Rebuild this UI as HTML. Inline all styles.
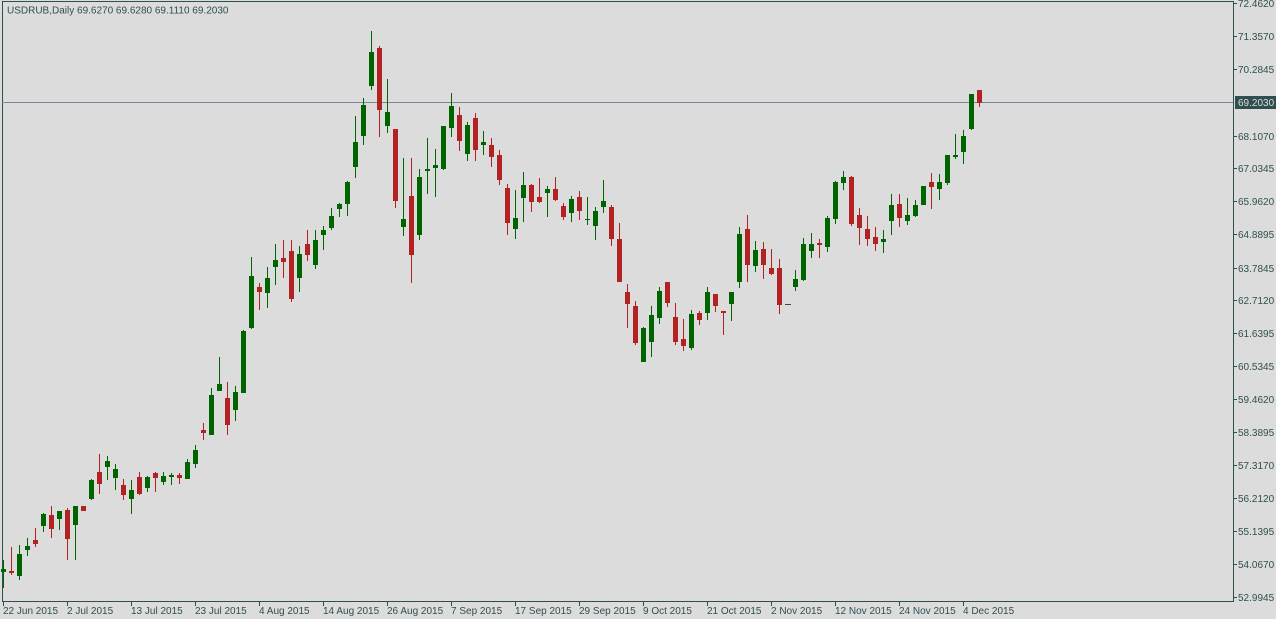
<!DOCTYPE html>
<html><head><meta charset="utf-8"><style>
html,body{margin:0;padding:0;background:#dcdcdc;}
svg{display:block;}
text{font-family:"Liberation Sans",sans-serif;font-size:10px;fill:#2f4f4f;}
</style></head><body>
<svg width="1276" height="619" viewBox="0 0 1276 619" xmlns="http://www.w3.org/2000/svg">
<rect width="1276" height="619" fill="#dcdcdc"/>
<rect x="2.5" y="1.5" width="1231" height="600" fill="none" stroke="#2f4f4f" stroke-width="1"/>
<line x1="2" y1="102.5" x2="1233" y2="102.5" stroke="#778899" stroke-width="1"/>
<text x="7" y="13.5">USDRUB,Daily  69.6270 69.6280 69.1110 69.2030</text>
<g stroke="#2f4f4f" stroke-width="1">
<line x1="1233" y1="3.5" x2="1237" y2="3.5"/><line x1="1233" y1="36.5" x2="1237" y2="36.5"/><line x1="1233" y1="69.5" x2="1237" y2="69.5"/><line x1="1233" y1="136.5" x2="1237" y2="136.5"/><line x1="1233" y1="168.5" x2="1237" y2="168.5"/><line x1="1233" y1="201.5" x2="1237" y2="201.5"/><line x1="1233" y1="234.5" x2="1237" y2="234.5"/><line x1="1233" y1="268.5" x2="1237" y2="268.5"/><line x1="1233" y1="300.5" x2="1237" y2="300.5"/><line x1="1233" y1="333.5" x2="1237" y2="333.5"/><line x1="1233" y1="366.5" x2="1237" y2="366.5"/><line x1="1233" y1="399.5" x2="1237" y2="399.5"/><line x1="1233" y1="432.5" x2="1237" y2="432.5"/><line x1="1233" y1="465.5" x2="1237" y2="465.5"/><line x1="1233" y1="498.5" x2="1237" y2="498.5"/><line x1="1233" y1="531.5" x2="1237" y2="531.5"/><line x1="1233" y1="564.5" x2="1237" y2="564.5"/><line x1="1233" y1="597.5" x2="1237" y2="597.5"/>
<line x1="3.5" y1="601" x2="3.5" y2="606"/><line x1="67.5" y1="601" x2="67.5" y2="606"/><line x1="131.5" y1="601" x2="131.5" y2="606"/><line x1="195.5" y1="601" x2="195.5" y2="606"/><line x1="259.5" y1="601" x2="259.5" y2="606"/><line x1="323.5" y1="601" x2="323.5" y2="606"/><line x1="387.5" y1="601" x2="387.5" y2="606"/><line x1="451.5" y1="601" x2="451.5" y2="606"/><line x1="515.5" y1="601" x2="515.5" y2="606"/><line x1="579.5" y1="601" x2="579.5" y2="606"/><line x1="643.5" y1="601" x2="643.5" y2="606"/><line x1="707.5" y1="601" x2="707.5" y2="606"/><line x1="771.5" y1="601" x2="771.5" y2="606"/><line x1="835.5" y1="601" x2="835.5" y2="606"/><line x1="899.5" y1="601" x2="899.5" y2="606"/><line x1="963.5" y1="601" x2="963.5" y2="606"/>
</g>
<g>
<text x="1238" y="7">72.4620</text><text x="1238" y="40">71.3570</text><text x="1238" y="73">70.2845</text>
<text x="1238" y="140">68.1070</text><text x="1238" y="172">67.0345</text><text x="1238" y="205">65.9620</text><text x="1238" y="238">64.8895</text><text x="1238" y="272">63.7845</text><text x="1238" y="304">62.7120</text><text x="1238" y="337">61.6395</text><text x="1238" y="370">60.5345</text><text x="1238" y="403">59.4620</text><text x="1238" y="436">58.3895</text><text x="1238" y="469">57.3170</text><text x="1238" y="502">56.2120</text><text x="1238" y="535">55.1395</text><text x="1238" y="568">54.0670</text><text x="1238" y="601">52.9945</text>
</g>
<rect x="1235" y="96" width="41" height="13" fill="#2f4f4f"/>
<text x="1238" y="106" style="fill:#dcdcdc">69.2030</text>
<g>
<text x="3" y="614">22 Jun 2015</text><text x="67" y="614">2 Jul 2015</text><text x="131" y="614">13 Jul 2015</text><text x="195" y="614">23 Jul 2015</text><text x="259" y="614">4 Aug 2015</text><text x="323" y="614">14 Aug 2015</text><text x="387" y="614">26 Aug 2015</text><text x="451" y="614">7 Sep 2015</text><text x="515" y="614">17 Sep 2015</text><text x="579" y="614">29 Sep 2015</text><text x="643" y="614">9 Oct 2015</text><text x="707" y="614">21 Oct 2015</text><text x="771" y="614">2 Nov 2015</text><text x="835" y="614">12 Nov 2015</text><text x="899" y="614">24 Nov 2015</text><text x="963" y="614">4 Dec 2015</text>
</g>
<g fill="#006400">
<rect x="3" y="560" width="1" height="28"/><rect x="1" y="569" width="5" height="3"/>
<rect x="19" y="545" width="1" height="35"/><rect x="17" y="554" width="5" height="22"/>
<rect x="27" y="538" width="1" height="18"/><rect x="25" y="546" width="5" height="4"/>
<rect x="43" y="513" width="1" height="19"/><rect x="41" y="514" width="5" height="12"/>
<rect x="59" y="511" width="1" height="19"/><rect x="57" y="511" width="5" height="8"/>
<rect x="75" y="506" width="1" height="54"/><rect x="73" y="506" width="5" height="19"/>
<rect x="91" y="479" width="1" height="21"/><rect x="89" y="480" width="5" height="19"/>
<rect x="107" y="456" width="1" height="24"/><rect x="105" y="461" width="5" height="6"/>
<rect x="115" y="464" width="1" height="26"/><rect x="113" y="469" width="5" height="9"/>
<rect x="131" y="480" width="1" height="34"/><rect x="129" y="490" width="5" height="9"/>
<rect x="147" y="476" width="1" height="16"/><rect x="145" y="477" width="5" height="11"/>
<rect x="163" y="472" width="1" height="13"/><rect x="161" y="476" width="5" height="6"/>
<rect x="171" y="473" width="1" height="12"/><rect x="169" y="475" width="5" height="2"/>
<rect x="187" y="459" width="1" height="20"/><rect x="185" y="462" width="5" height="17"/>
<rect x="195" y="445" width="1" height="23"/><rect x="193" y="450" width="5" height="14"/>
<rect x="211" y="388" width="1" height="47"/><rect x="209" y="395" width="5" height="40"/>
<rect x="219" y="357" width="1" height="34"/><rect x="217" y="384" width="5" height="7"/>
<rect x="235" y="386" width="1" height="35"/><rect x="233" y="392" width="5" height="18"/>
<rect x="243" y="330" width="1" height="63"/><rect x="241" y="331" width="5" height="62"/>
<rect x="251" y="257" width="1" height="72"/><rect x="249" y="276" width="5" height="52"/>
<rect x="267" y="267" width="1" height="41"/><rect x="265" y="278" width="5" height="15"/>
<rect x="275" y="244" width="1" height="41"/><rect x="273" y="260" width="5" height="7"/>
<rect x="299" y="246" width="1" height="46"/><rect x="297" y="254" width="5" height="24"/>
<rect x="315" y="230" width="1" height="39"/><rect x="313" y="240" width="5" height="25"/>
<rect x="323" y="226" width="1" height="24"/><rect x="321" y="230" width="5" height="5"/>
<rect x="331" y="208" width="1" height="22"/><rect x="329" y="216" width="5" height="12"/>
<rect x="339" y="203" width="1" height="14"/><rect x="337" y="204" width="5" height="5"/>
<rect x="347" y="181" width="1" height="35"/><rect x="345" y="182" width="5" height="22"/>
<rect x="355" y="116" width="1" height="62"/><rect x="353" y="142" width="5" height="25"/>
<rect x="363" y="98" width="1" height="47"/><rect x="361" y="105" width="5" height="31"/>
<rect x="371" y="31" width="1" height="59"/><rect x="369" y="52" width="5" height="34"/>
<rect x="387" y="79" width="1" height="54"/><rect x="385" y="112" width="5" height="14"/>
<rect x="403" y="158" width="1" height="78"/><rect x="401" y="219" width="5" height="8"/>
<rect x="419" y="169" width="1" height="71"/><rect x="417" y="177" width="5" height="58"/>
<rect x="427" y="138" width="1" height="56"/><rect x="425" y="169" width="5" height="2"/>
<rect x="435" y="149" width="1" height="48"/><rect x="433" y="165" width="5" height="3"/>
<rect x="443" y="126" width="1" height="44"/><rect x="441" y="126" width="5" height="43"/>
<rect x="451" y="93" width="1" height="44"/><rect x="449" y="106" width="5" height="22"/>
<rect x="467" y="122" width="1" height="39"/><rect x="465" y="125" width="5" height="29"/>
<rect x="483" y="131" width="1" height="24"/><rect x="481" y="142" width="5" height="3"/>
<rect x="515" y="190" width="1" height="49"/><rect x="513" y="218" width="5" height="11"/>
<rect x="523" y="172" width="1" height="50"/><rect x="521" y="185" width="5" height="13"/>
<rect x="547" y="186" width="1" height="31"/><rect x="545" y="189" width="5" height="4"/>
<rect x="571" y="196" width="1" height="26"/><rect x="569" y="199" width="5" height="14"/>
<rect x="587" y="197" width="1" height="28"/><rect x="585" y="219" width="5" height="1"/>
<rect x="595" y="207" width="1" height="33"/><rect x="593" y="211" width="5" height="15"/>
<rect x="603" y="180" width="1" height="33"/><rect x="601" y="201" width="5" height="6"/>
<rect x="643" y="327" width="1" height="35"/><rect x="641" y="328" width="5" height="34"/>
<rect x="651" y="306" width="1" height="51"/><rect x="649" y="315" width="5" height="27"/>
<rect x="659" y="287" width="1" height="37"/><rect x="657" y="291" width="5" height="27"/>
<rect x="691" y="310" width="1" height="40"/><rect x="689" y="314" width="5" height="34"/>
<rect x="707" y="287" width="1" height="33"/><rect x="705" y="292" width="5" height="21"/>
<rect x="731" y="292" width="1" height="29"/><rect x="729" y="292" width="5" height="12"/>
<rect x="739" y="227" width="1" height="61"/><rect x="737" y="234" width="5" height="48"/>
<rect x="755" y="241" width="1" height="31"/><rect x="753" y="250" width="5" height="16"/>
<rect x="795" y="270" width="1" height="21"/><rect x="793" y="279" width="5" height="8"/>
<rect x="803" y="238" width="1" height="43"/><rect x="801" y="244" width="5" height="36"/>
<rect x="811" y="233" width="1" height="25"/><rect x="809" y="244" width="5" height="7"/>
<rect x="827" y="216" width="1" height="36"/><rect x="825" y="218" width="5" height="29"/>
<rect x="835" y="181" width="1" height="43"/><rect x="833" y="182" width="5" height="37"/>
<rect x="843" y="171" width="1" height="19"/><rect x="841" y="177" width="5" height="6"/>
<rect x="883" y="230" width="1" height="23"/><rect x="881" y="239" width="5" height="3"/>
<rect x="891" y="194" width="1" height="41"/><rect x="889" y="205" width="5" height="16"/>
<rect x="907" y="198" width="1" height="27"/><rect x="905" y="215" width="5" height="6"/>
<rect x="915" y="200" width="1" height="17"/><rect x="913" y="205" width="5" height="11"/>
<rect x="923" y="186" width="1" height="19"/><rect x="921" y="186" width="5" height="19"/>
<rect x="939" y="174" width="1" height="26"/><rect x="937" y="182" width="5" height="7"/>
<rect x="947" y="155" width="1" height="30"/><rect x="945" y="155" width="5" height="28"/>
<rect x="955" y="134" width="1" height="25"/><rect x="953" y="155" width="5" height="2"/>
<rect x="963" y="130" width="1" height="34"/><rect x="961" y="136" width="5" height="16"/>
<rect x="971" y="94" width="1" height="36"/><rect x="969" y="94" width="5" height="35"/>
</g>
<g fill="#b22222">
<rect x="11" y="547" width="1" height="28"/><rect x="9" y="571" width="5" height="2"/>
<rect x="35" y="528" width="1" height="19"/><rect x="33" y="540" width="5" height="4"/>
<rect x="51" y="506" width="1" height="32"/><rect x="49" y="515" width="5" height="14"/>
<rect x="67" y="508" width="1" height="52"/><rect x="65" y="510" width="5" height="29"/>
<rect x="81" y="506" width="5" height="5"/>
<rect x="99" y="454" width="1" height="40"/><rect x="97" y="472" width="5" height="12"/>
<rect x="123" y="479" width="1" height="21"/><rect x="121" y="485" width="5" height="10"/>
<rect x="139" y="472" width="1" height="23"/><rect x="137" y="477" width="5" height="17"/>
<rect x="155" y="472" width="1" height="20"/><rect x="153" y="473" width="5" height="5"/>
<rect x="179" y="473" width="1" height="11"/><rect x="177" y="475" width="5" height="3"/>
<rect x="203" y="423" width="1" height="17"/><rect x="201" y="430" width="5" height="3"/>
<rect x="227" y="382" width="1" height="53"/><rect x="225" y="398" width="5" height="27"/>
<rect x="259" y="283" width="1" height="27"/><rect x="257" y="287" width="5" height="5"/>
<rect x="283" y="240" width="1" height="38"/><rect x="281" y="258" width="5" height="4"/>
<rect x="291" y="240" width="1" height="62"/><rect x="289" y="251" width="5" height="48"/>
<rect x="307" y="230" width="1" height="31"/><rect x="305" y="244" width="5" height="11"/>
<rect x="379" y="46" width="1" height="91"/><rect x="377" y="48" width="5" height="62"/>
<rect x="395" y="129" width="1" height="79"/><rect x="393" y="129" width="5" height="72"/>
<rect x="411" y="158" width="1" height="125"/><rect x="409" y="196" width="5" height="59"/>
<rect x="459" y="107" width="1" height="44"/><rect x="457" y="115" width="5" height="26"/>
<rect x="475" y="113" width="1" height="48"/><rect x="473" y="118" width="5" height="32"/>
<rect x="491" y="138" width="1" height="29"/><rect x="489" y="145" width="5" height="12"/>
<rect x="499" y="150" width="1" height="35"/><rect x="497" y="155" width="5" height="25"/>
<rect x="507" y="184" width="1" height="51"/><rect x="505" y="188" width="5" height="35"/>
<rect x="531" y="184" width="1" height="28"/><rect x="529" y="185" width="5" height="17"/>
<rect x="539" y="178" width="1" height="25"/><rect x="537" y="197" width="5" height="5"/>
<rect x="555" y="177" width="1" height="24"/><rect x="553" y="189" width="5" height="11"/>
<rect x="563" y="203" width="1" height="17"/><rect x="561" y="206" width="5" height="11"/>
<rect x="579" y="191" width="1" height="29"/><rect x="577" y="197" width="5" height="14"/>
<rect x="611" y="205" width="1" height="41"/><rect x="609" y="207" width="5" height="32"/>
<rect x="619" y="223" width="1" height="59"/><rect x="617" y="239" width="5" height="43"/>
<rect x="627" y="284" width="1" height="44"/><rect x="625" y="292" width="5" height="12"/>
<rect x="635" y="301" width="1" height="44"/><rect x="633" y="306" width="5" height="37"/>
<rect x="667" y="282" width="1" height="25"/><rect x="665" y="282" width="5" height="21"/>
<rect x="675" y="303" width="1" height="42"/><rect x="673" y="317" width="5" height="25"/>
<rect x="683" y="319" width="1" height="32"/><rect x="681" y="339" width="5" height="7"/>
<rect x="699" y="311" width="1" height="14"/><rect x="697" y="313" width="5" height="7"/>
<rect x="715" y="294" width="1" height="18"/><rect x="713" y="294" width="5" height="12"/>
<rect x="723" y="311" width="1" height="24"/><rect x="721" y="311" width="5" height="2"/>
<rect x="747" y="215" width="1" height="67"/><rect x="745" y="229" width="5" height="36"/>
<rect x="763" y="242" width="1" height="37"/><rect x="761" y="249" width="5" height="16"/>
<rect x="771" y="249" width="1" height="26"/><rect x="769" y="268" width="5" height="6"/>
<rect x="779" y="259" width="1" height="55"/><rect x="777" y="268" width="5" height="37"/>
<rect x="819" y="239" width="1" height="19"/><rect x="817" y="243" width="5" height="2"/>
<rect x="851" y="176" width="1" height="50"/><rect x="849" y="177" width="5" height="47"/>
<rect x="859" y="208" width="1" height="37"/><rect x="857" y="215" width="5" height="13"/>
<rect x="867" y="216" width="1" height="30"/><rect x="865" y="229" width="5" height="10"/>
<rect x="875" y="227" width="1" height="24"/><rect x="873" y="237" width="5" height="7"/>
<rect x="899" y="194" width="1" height="33"/><rect x="897" y="204" width="5" height="14"/>
<rect x="931" y="173" width="1" height="36"/><rect x="929" y="182" width="5" height="5"/>
<rect x="979" y="90" width="1" height="17"/><rect x="977" y="90" width="5" height="13"/>
</g>
<rect x="785" y="304" width="6" height="1" fill="#2f4f4f"/>
</svg>
</body></html>
